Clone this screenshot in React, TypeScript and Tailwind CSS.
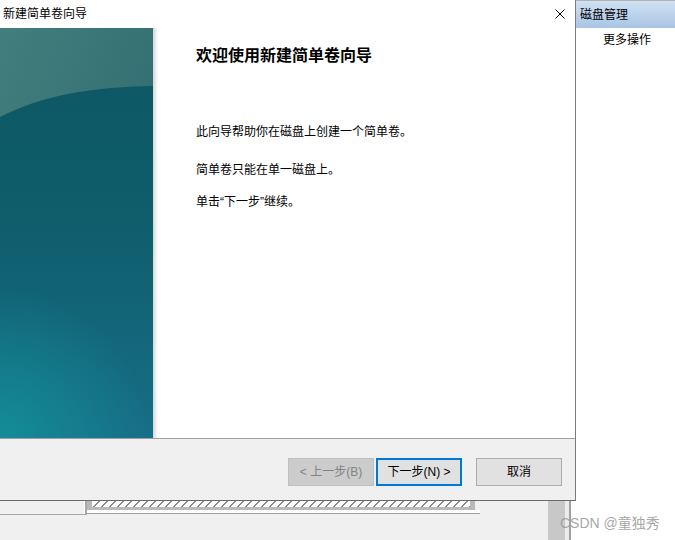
function TealArt() {
  return (
    <svg width="153" height="410" viewBox="0 0 153 410" className="block shrink-0">
      <defs>
        <linearGradient id="sky" x1="0" y1="0" x2="1" y2="1">
          <stop offset="0" stopColor="#437e7e" />
          <stop offset="1" stopColor="#29656b" />
        </linearGradient>
        <linearGradient id="deep" x1="0" y1="0" x2="0" y2="1">
          <stop offset="0" stopColor="#0d5864" />
          <stop offset="0.45" stopColor="#0f5f6e" />
          <stop offset="1" stopColor="#186e88" />
        </linearGradient>
        <radialGradient id="glow" cx="0" cy="410" r="150" gradientUnits="userSpaceOnUse">
          <stop offset="0" stopColor="#12929a" stopOpacity="0.85" />
          <stop offset="1" stopColor="#12929a" stopOpacity="0" />
        </radialGradient>
      </defs>
      <rect width="153" height="410" fill="url(#sky)" />
      <path d="M0 89 C40 68 90 59 153 58 L153 410 L0 410 Z" fill="url(#deep)" />
      <rect width="153" height="410" fill="url(#glow)" />
    </svg>
  )
}

function Wizard() {
  return (
    <div className="flex h-[501px] flex-col border-r border-b border-r-[#7a7a7a] border-b-[#6a6a6a] bg-white">
      {/* title bar */}
      <div className="flex h-[28px] items-center justify-between pl-[3px] pr-[10px]">
        <span className="leading-[16px]">新建简单卷向导</span>
        <svg width="10" height="10" viewBox="0 0 10 10" className="block">
          <path d="M0.5 0.5 L9.5 9.5 M9.5 0.5 L0.5 9.5" stroke="#000" strokeWidth="1" />
        </svg>
      </div>

      <div className="flex h-[410px]">
        <TealArt />
        <div className="w-[5px] shrink-0 bg-gradient-to-r from-[#d6d6d6] to-white" />
        <div className="flex-1 pl-[38px] pt-[18px]">
          <h1 className="text-[16px] font-bold leading-[20px]">欢迎使用新建简单卷向导</h1>
          <p className="mt-[58px] leading-[16px]">此向导帮助你在磁盘上创建一个简单卷。</p>
          <p className="mt-[22px] leading-[16px]">简单卷只能在单一磁盘上。</p>
          <p className="mt-[16px] leading-[16px]">单击“下一步”继续。</p>
        </div>
      </div>

      <div className="h-px bg-[#a0a0a0]" />

      {/* buttons */}
      <div className="flex flex-1 items-start justify-end bg-[#f0f0f0] pr-[13px] pt-[19px]">
        <button className="h-[28px] w-[86px] border border-[#bfbfbf] bg-[#cccccc] text-[#838383]">
          &lt; 上一步(B)
        </button>
        <button className="ml-[2px] h-[28px] w-[86px] border-2 border-[#0078d7] bg-[#e1e1e1]">
          下一步(N) &gt;
        </button>
        <button className="ml-[14px] h-[28px] w-[86px] border border-[#adadad] bg-[#e1e1e1]">
          取消
        </button>
      </div>
    </div>
  )
}

function DiskStrip() {
  return (
    <div className="flex flex-1 bg-[#f0f0f0]">
      <div className="h-[14px] w-[87px] border-r-2 border-b border-[#a8a8a8] shadow-[inset_-1px_0_0_#ffffff]" />
      <div className="flex w-[393px] flex-col">
        <div className="mr-[5px] h-[9px] bg-[#b9b9b9] pr-[5px] pl-[5px] pb-[3px]">
          <div className="h-[6px] bg-[repeating-linear-gradient(135deg,#ffffff_0px,#ffffff_4.5px,#8a8a8a_4.5px,#8a8a8a_5.66px)]" />
        </div>
        <div className="h-[4px] border-b border-[#a0a0a0] bg-white" />
      </div>
      <div className="flex-1" />
      {/* scroll bar */}
      <div className="w-[17px] bg-[#c8c8c8]" />
      <div className="w-[4px] bg-[#ececec]" />
      <div className="w-[2px] bg-[#a0a0a0]" />
      <div className="w-[5px] bg-white" />
    </div>
  )
}

function SidePane() {
  return (
    <div className="flex flex-1 flex-col border-t border-[#b0b0b0] bg-white">
      <div className="flex h-[27px] items-center bg-gradient-to-b from-[#d0e1f3] to-[#a8c4e3] pl-[4px]">
        <span className="leading-[16px]">磁盘管理</span>
      </div>
      <div className="mt-[4px] pl-[27px] leading-[16px]">更多操作</div>
    </div>
  )
}

export default function App() {
  return (
    <div className="relative flex h-[540px] w-[675px] overflow-hidden bg-white font-['Liberation_Sans','Noto_Sans_CJK_SC',sans-serif] text-[12px] text-black">
      <div className="flex w-[576px] shrink-0 flex-col">
        <Wizard />
        <DiskStrip />
      </div>
      <SidePane />
      <span className="absolute top-[515px] left-[560px] text-[14px] leading-[16px] text-[#9c9c9c]/90">
        CSDN @童独秀
      </span>
    </div>
  )
}
